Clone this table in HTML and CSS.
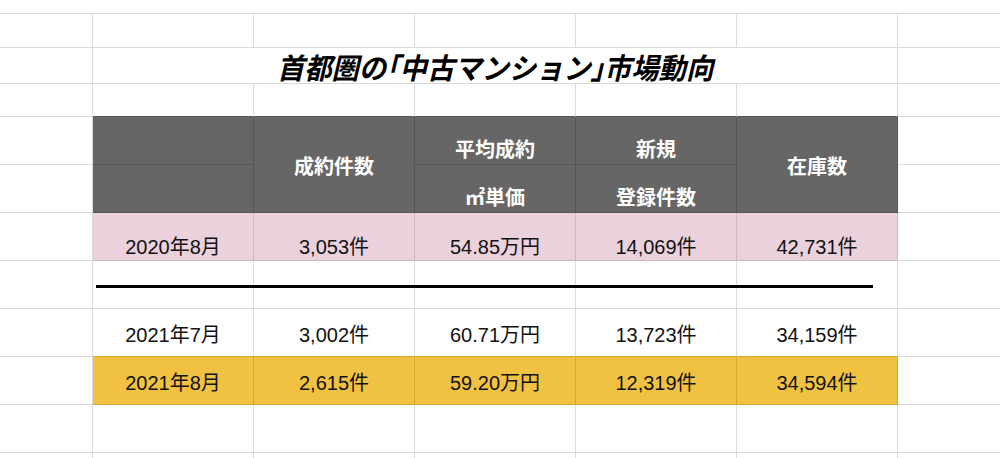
FILE: index.html
```html
<!DOCTYPE html>
<html lang="ja">
<head>
<meta charset="utf-8">
<title>首都圏の「中古マンション」市場動向</title>
<link rel="stylesheet" href="styles.css">
</head>
<body>
<div class="sheet">
  <div class="rule"></div>

  <div class="c top"></div>

  <div class="c"></div><div class="c"></div><div class="c"></div><div class="c"></div><div class="c"></div><div class="c"></div><div class="c last"></div>

  <div class="c"></div>
  <div class="c title"><h1>首都圏の<span class="br">「</span>中古マンション<span class="br">」</span>市場動向</h1></div>
  <div class="c last"></div>

  <div class="c"></div><div class="c hd-above"></div><div class="c hd-above"></div><div class="c hd-above"></div><div class="c hd-above"></div><div class="c hd-above"></div><div class="c last"></div>

  <div class="c"></div>
  <div class="c h"></div>
  <div class="c h tall">成約件数</div>
  <div class="c h">平均成約</div>
  <div class="c h">新規</div>
  <div class="c h tall">在庫数</div>
  <div class="c last"></div>

  <div class="c"></div>
  <div class="c h"></div>
  <div class="c h">㎡単価</div>
  <div class="c h">登録件数</div>
  <div class="c last"></div>

  <div class="c"></div>
  <div class="c p">2020年8月</div>
  <div class="c p">3,053件</div>
  <div class="c p">54.85万円</div>
  <div class="c p">14,069件</div>
  <div class="c p">42,731件</div>
  <div class="c last"></div>

  <div class="c"></div><div class="c"></div><div class="c"></div><div class="c"></div><div class="c"></div><div class="c"></div><div class="c last"></div>

  <div class="c"></div>
  <div class="c d y-above">2021年7月</div>
  <div class="c d y-above">3,002件</div>
  <div class="c d y-above">60.71万円</div>
  <div class="c d y-above">13,723件</div>
  <div class="c d y-above">34,159件</div>
  <div class="c last"></div>

  <div class="c"></div>
  <div class="c d y">2021年8月</div>
  <div class="c d y">2,615件</div>
  <div class="c d y">59.20万円</div>
  <div class="c d y">12,319件</div>
  <div class="c d y">34,594件</div>
  <div class="c last"></div>

  <div class="c"></div><div class="c"></div><div class="c"></div><div class="c"></div><div class="c"></div><div class="c"></div><div class="c last"></div>

  <div class="c end"></div><div class="c end"></div><div class="c end"></div><div class="c end"></div><div class="c end"></div><div class="c end"></div><div class="c end last"></div>
</div>
</body>
</html>
```
FILE: styles.css
```css
* { box-sizing: border-box; }

html, body {
  margin: 0;
  padding: 0;
  background: #ffffff;
}

body {
  font-family: "Liberation Sans", "Noto Sans CJK JP", sans-serif;
  font-size: 20px;
  color: #111111;
}

.sheet {
  position: relative;
  width: 1000px;
  height: 458px;
  overflow: hidden;
  display: grid;
  grid-template-columns: 93px 161px 161px 161px 161px 161px 1fr;
  grid-template-rows: 14px 34px 36px 33px 48px 48px 48px 48px 48px 48px 48px 1fr;
}

.c {
  border-right: 1px solid #dadada;
  border-bottom: 1px solid #dadada;
  display: flex;
  justify-content: center;
  align-items: flex-end;
  line-height: 24px;
  white-space: nowrap;
}

.c.last { border-right: none; }
.c.end { border-bottom: none; }

.c.top {
  grid-column: 1 / -1;
  border-right: none;
}

.c.title {
  grid-column: span 5;
  align-items: center;
}

.title h1 {
  margin: 0;
  font-family: "Noto Sans CJK JP", sans-serif;
  font-size: 29px;
  font-weight: 700;
  font-style: italic;
  line-height: 34px;
  color: #000000;
  transform: scaleX(0.94);
}

.title .br {
  font-feature-settings: "halt";
}

.c.hd-above { border-bottom-color: #555555; }

.c.h {
  background: #666666;
  border-color: #555555;
  color: #ffffff;
  font-weight: 700;
  padding-bottom: 2px;
}

.c.h.tall {
  grid-row: span 2;
  align-items: center;
  padding-bottom: 0;
  padding-top: 4px;
}

.c.p {
  background: #ead1dc;
  border-color: #cdb7c1;
  padding-bottom: 1px;
}

.c.d { padding-bottom: 9px; }

.c.y-above { border-bottom-color: #d6a92c; }

.c.y {
  background: #f1c242;
  border-color: #d6a92c;
}

.rule {
  position: absolute;
  left: 96px;
  top: 285px;
  width: 777px;
  height: 3px;
  background: #000000;
  z-index: 2;
}
```
